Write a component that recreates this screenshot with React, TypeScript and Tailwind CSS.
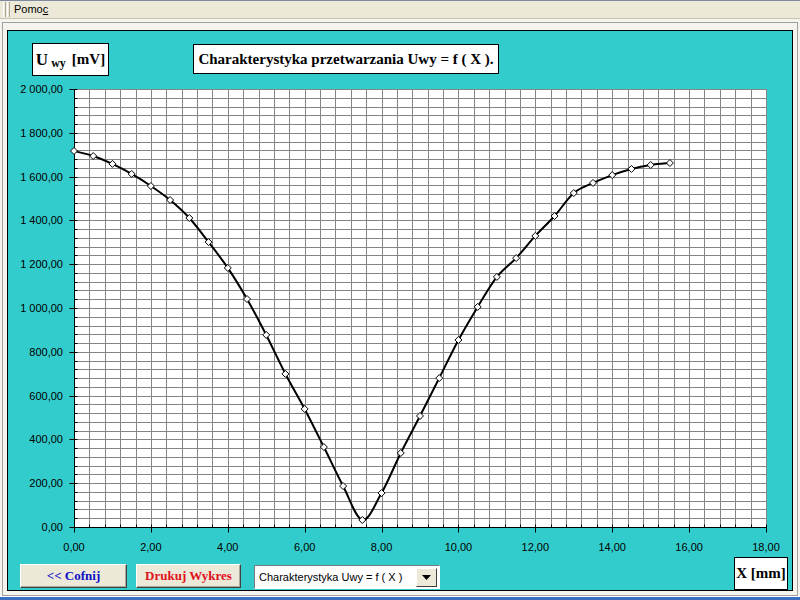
import React from "react";

const data: [number, number][] = [
  [0, 1717], [0.5, 1694], [1, 1658], [1.5, 1612], [2, 1557], [2.5, 1493],
  [3, 1411], [3.5, 1301], [4, 1183], [4.5, 1041], [5, 877], [5.5, 699],
  [6, 539], [6.5, 365], [7, 187], [7.5, 32], [8, 155], [8.5, 338],
  [9, 507], [9.5, 680], [10, 854], [10.5, 1005], [11, 1142], [11.5, 1228],
  [12, 1329], [12.5, 1420], [13, 1525], [13.5, 1571], [14, 1607], [14.5, 1635],
  [15, 1653], [15.5, 1662],
];

// plot box inside the svg
const X0 = 66;
const X1 = 758;
const Y0 = 13;
const Y1 = 451;
const sx = (x: number) => X0 + (x * (X1 - X0)) / 18;
const sy = (u: number) => Y1 - (u * (Y1 - Y0)) / 2000;
const crisp = (v: number) => Math.round(v) + 0.5;

const fmt = (v: number) => {
  const [i, d] = v.toFixed(2).split(".");
  return i.replace(/\B(?=(\d{3})+(?!\d))/g, " ") + "," + d;
};

function smoothPath(pts: [number, number][]) {
  const p = pts.map(([x, u]) => [sx(x), sy(u)]);
  let d = `M${p[0][0]},${p[0][1]}`;
  for (let i = 0; i < p.length - 1; i++) {
    const a = p[i - 1] || p[i];
    const b = p[i];
    const c = p[i + 1];
    const e = p[i + 2] || c;
    const c1x = b[0] + (c[0] - a[0]) / 6;
    const c1y = b[1] + (c[1] - a[1]) / 6;
    const c2x = c[0] - (e[0] - b[0]) / 6;
    const c2y = c[1] - (e[1] - b[1]) / 6;
    d += ` C${c1x},${c1y} ${c2x},${c2y} ${c[0]},${c[1]}`;
  }
  return d;
}

function Chart() {
  const vLines = Array.from({ length: 46 }, (_, k) => crisp(X0 + (k * (X1 - X0)) / 45));
  const hLines = Array.from({ length: 51 }, (_, k) => crisp(Y0 + (k * (Y1 - Y0)) / 50));
  const yMajors = Array.from({ length: 11 }, (_, k) => k * 200);
  const xMajors = Array.from({ length: 10 }, (_, k) => k * 2);
  const ax = crisp(X0);
  const ay = crisp(Y1);

  return (
    <svg width={784} height={481} className="block" style={{ fontFamily: '"Liberation Sans", Arial, sans-serif' }}>
      <rect x={X0} y={Y0} width={X1 - X0} height={Y1 - Y0} fill="#ffffff" />
      {vLines.map((x, i) => (
        <line key={"v" + i} x1={x} y1={Y0} x2={x} y2={Y1} stroke="#858585" strokeWidth={1} />
      ))}
      {hLines.map((y, i) => (
        <line key={"h" + i} x1={X0} y1={y} x2={X1} y2={y} stroke="#858585" strokeWidth={1} />
      ))}

      {/* axes */}
      <line x1={ax} y1={Y0} x2={ax} y2={ay} stroke="#000" strokeWidth={1} />
      <line x1={ax} y1={ay} x2={X1 + 1} y2={ay} stroke="#000" strokeWidth={1} />
      {hLines.map((y, i) => (
        <line key={"ht" + i} x1={ax} y1={y} x2={ax + 3} y2={y} stroke="#000" strokeWidth={1} />
      ))}
      {vLines.map((x, i) => (
        <line key={"vt" + i} x1={x} y1={ay - 3} x2={x} y2={ay} stroke="#000" strokeWidth={1} />
      ))}
      {yMajors.map((u) => (
        <g key={"ym" + u}>
          <line x1={ax - 5} y1={crisp(sy(u))} x2={ax} y2={crisp(sy(u))} stroke="#000" strokeWidth={1} />
          <text x={55} y={sy(u) + 4} textAnchor="end" fontSize={11} fill="#000">
            {fmt(u)}
          </text>
        </g>
      ))}
      {xMajors.map((x) => (
        <g key={"xm" + x}>
          <line x1={crisp(sx(x))} y1={ay} x2={crisp(sx(x))} y2={ay + 5} stroke="#000" strokeWidth={1} />
          <text x={sx(x)} y={475} textAnchor="middle" fontSize={11} fill="#000">
            {fmt(x)}
          </text>
        </g>
      ))}

      <path d={smoothPath(data)} fill="none" stroke="#000" strokeWidth={2} />
      {data.map(([x, u], i) => {
        const cx = sx(x);
        const cy = sy(u);
        return (
          <polygon
            key={"m" + i}
            points={`${cx},${cy - 3.5} ${cx + 3.5},${cy} ${cx},${cy + 3.5} ${cx - 3.5},${cy}`}
            fill="#fff"
            stroke="#000"
            strokeWidth={1}
          />
        );
      })}
    </svg>
  );
}

export default function App() {
  return (
    <div className="w-[800px] h-[600px] flex flex-col overflow-hidden bg-[#f5f4ef] font-['Liberation_Sans',Arial,sans-serif]">
      {/* menu bar */}
      <div className="h-[19px] flex items-center bg-[#ece9d8] border-t border-[#7f8ca0] border-b border-b-[#c9c5b2]">
        <div className="ml-[3px] h-[15px] flex gap-[1px]">
          <div className="w-[1px] bg-white" />
          <div className="w-[1px] bg-[#aca899]" />
          <div className="w-[1px] bg-white" />
          <div className="w-[1px] bg-[#aca899]" />
        </div>
        <span className="ml-[4px] text-[11px] leading-none text-black">
          Pomo<span className="underline">c</span>
        </span>
      </div>
      <div className="h-[3px]" />

      {/* window */}
      <div className="mx-[2px] h-[574px] border border-[#a0a0a0] px-[4px] pt-[7px]">
        <div className="h-[561px] bg-[#33cccc] border border-black flex flex-col">
          {/* top labels */}
          <div className="flex items-start pt-[12px] h-[45px]">
            <div className="ml-[24px] w-[77px] h-[33px] bg-white border border-black flex items-center justify-center font-['Liberation_Serif',serif] font-bold text-black">
              <span className="text-[17px] leading-none">U</span>
              <span className="text-[12px] leading-none ml-[3px] mt-[7px]">wy</span>
              <span className="text-[15px] leading-none ml-[6px]">[mV]</span>
            </div>
            <div className="ml-[84px] mt-[1px] w-[306px] h-[30px] bg-white border border-black flex items-center justify-center font-['Liberation_Serif',serif] font-bold text-[15px] text-black">
              Charakterystyka przetwarzania Uwy = f ( X ).
            </div>
          </div>

          <Chart />

          {/* bottom row */}
          <div className="flex items-start h-[33px]">
            <button className="ml-[12px] mt-[7px] w-[107px] h-[24px] bg-[#ece9d8] border border-t-white border-l-white border-b-[#404040] border-r-[#404040] shadow-[inset_-1px_-1px_0_#aca899] font-['Liberation_Serif',serif] font-bold text-[13px] text-[#1010c8]">
              &lt;&lt; Cofnij
            </button>
            <button className="ml-[9px] mt-[7px] w-[105px] h-[24px] bg-[#ece9d8] border border-t-white border-l-white border-b-[#404040] border-r-[#404040] shadow-[inset_-1px_-1px_0_#aca899] font-['Liberation_Serif',serif] font-bold text-[13px] text-[#e0101c]">
              Drukuj Wykres
            </button>
            <div className="ml-[13px] mt-[8px] w-[186px] h-[24px] bg-white border border-t-[#7a7a7a] border-l-[#7a7a7a] border-b-white border-r-white flex items-center">
              <span className="ml-[4px] text-[11px] text-black flex-1 whitespace-nowrap">Charakterystyka Uwy = f ( X )</span>
              <div className="w-[21px] h-[19px] mr-[2px] bg-[#ece9d8] border border-t-white border-l-white border-b-[#404040] border-r-[#404040] flex items-center justify-center">
                <svg width="9" height="5" viewBox="0 0 9 5">
                  <polygon points="0,0 9,0 4.5,5" fill="#000" />
                </svg>
              </div>
            </div>
            <div className="ml-auto mr-[4px] w-[54px] h-[33px] bg-white border border-black flex items-center justify-center font-['Liberation_Serif',serif] font-bold text-[15px] text-black">
              X [mm]
            </div>
          </div>
        </div>
      </div>
      <div className="h-[1px] bg-white" />
      <div className="h-[3px] bg-[#3a6fc4]" />
    </div>
  );
}
